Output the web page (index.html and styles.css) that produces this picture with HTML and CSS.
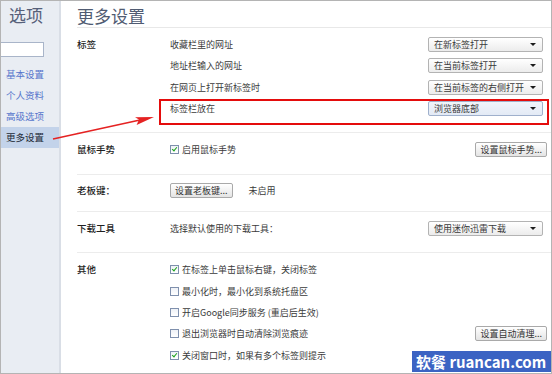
FILE: index.html
```html
<!DOCTYPE html>
<html lang="zh">
<head>
<meta charset="utf-8">
<title>更多设置</title>
<link rel="stylesheet" href="styles.css">
</head>
<body>
<div class="frame">
  <aside class="side">
    <div class="side-title">选项</div>
    <div class="search"></div>
    <nav class="nav">
      <a class="nav-item">基本设置</a>
      <a class="nav-item">个人资料</a>
      <a class="nav-item">高级选项</a>
      <a class="nav-item active">更多设置</a>
    </nav>
  </aside>
  <main class="main">
    <div class="title">更多设置</div>

    <section class="sec">
      <div class="label">标签</div>
      <div class="rows">
        <div class="row"><span>收藏栏里的网址</span><div class="select">在新标签打开<i class="caret"></i></div></div>
        <div class="row"><span>地址栏输入的网址</span><div class="select">在当前标签打开<i class="caret"></i></div></div>
        <div class="row"><span>在网页上打开新标签时</span><div class="select">在当前标签的右侧打开<i class="caret"></i></div></div>
        <div class="row hl"><span>标签栏放在</span><div class="select focus">浏览器底部<i class="caret"></i></div><div class="redbox"></div></div>
      </div>
    </section>

    <section class="sec">
      <div class="label">鼠标手势</div>
      <div class="rows">
        <div class="row"><span class="check"><i class="cb on"></i>启用鼠标手势</span><div class="btn edge">设置鼠标手势...</div></div>
      </div>
    </section>

    <section class="sec tight">
      <div class="label">老板键：</div>
      <div class="rows">
        <div class="row start"><div class="btn">设置老板键...</div><span class="status">未启用</span></div>
      </div>
    </section>

    <section class="sec">
      <div class="label">下载工具</div>
      <div class="rows">
        <div class="row"><span>选择默认使用的下载工具：</span><div class="select">使用迷你迅雷下载<i class="caret"></i></div></div>
      </div>
    </section>

    <section class="sec last">
      <div class="label">其他</div>
      <div class="rows">
        <div class="row"><span class="check"><i class="cb on"></i>在标签上单击鼠标右键，关闭标签</span></div>
        <div class="row"><span class="check"><i class="cb"></i>最小化时，最小化到系统托盘区</span></div>
        <div class="row"><span class="check"><i class="cb"></i>开启Google同步服务 (重启后生效)</span></div>
        <div class="row"><span class="check"><i class="cb"></i>退出浏览器时自动清除浏览痕迹</span><div class="btn edge">设置自动清理...</div></div>
        <div class="row"><span class="check"><i class="cb on"></i>关闭窗口时，如果有多个标签则提示</span></div>
      </div>
    </section>
  </main>

  <svg class="arrow" width="552" height="374" viewBox="0 0 552 374">
    <line x1="53" y1="139" x2="140" y2="120" stroke="#e52222" stroke-width="1.6"/>
    <polygon points="154,117 136.6,125 139,119.6 135,117.2" fill="#e52222"/>
  </svg>

  <div class="watermark">软餐 ruancan.com</div>
</div>
</body>
</html>
```

FILE: styles.css
```css
* { box-sizing: border-box; }

html, body {
  margin: 0;
  padding: 0;
  background: #ffffff;
}

body {
  font-family: "Noto Sans CJK SC", "Noto Sans", sans-serif;
  font-size: 9px;
  color: #3a3a3a;
}

.frame {
  position: relative;
  width: 552px;
  height: 374px;
  border: 1px solid #b4b4b4;
  display: flex;
  overflow: hidden;
  background: #ffffff;
}

/* ---------- sidebar ---------- */
.side {
  width: 60px;
  flex: none;
  background: #e9edf3;
  border-right: 2px solid #d9dee6;
  display: flex;
  flex-direction: column;
}

.side-title {
  font-size: 17px;
  line-height: 22px;
  height: 22px;
  margin: 3px 0 0 8px;
  color: #56607a;
}

.search {
  width: 43px;
  height: 15px;
  margin-top: 16px;
  background: #ffffff;
  border: 1px solid #a9b5c9;
  border-left: none;
}

.nav {
  display: flex;
  flex-direction: column;
  margin-top: 7px;
}

.nav-item {
  height: 21px;
  line-height: 21px;
  padding-left: 5px;
  font-size: 9.5px;
  color: #5675cc;
  text-decoration: none;
}

.nav-item.active {
  background: #c3d3ea;
  color: #222a38;
}

/* ---------- main ---------- */
.main {
  flex: 1;
  padding-left: 16px;
  display: flex;
  flex-direction: column;
}

.title {
  height: 30px;
  padding-top: 4px;
  font-size: 17px;
  line-height: 22px;
  color: #505b72;
  border-bottom: 1px solid #e8e8e8;
}

.sec {
  display: grid;
  grid-template-columns: 93px 1fr;
  padding: 6px 0 13px;
  border-bottom: 1px solid #ececec;
}

.sec.tight {
  padding: 5px 0 10px;
}

.sec.last {
  border-bottom: none;
}

.label {
  line-height: 21.33px;
  font-size: 9.5px;
  color: #1f1f1f;
  font-weight: 500;
}

.rows {
  display: flex;
  flex-direction: column;
}

.row {
  position: relative;
  height: 21.33px;
  display: flex;
  align-items: center;
  justify-content: space-between;
  padding-right: 4px;
  white-space: nowrap;
}

.row.start {
  justify-content: flex-start;
}

.status {
  margin-left: 16px;
}

/* select */
.select {
  position: relative;
  width: 115px;
  height: 15px;
  margin-right: 4px;
  padding-left: 5px;
  line-height: 13px;
  border: 1px solid #b3b3b3;
  border-radius: 2px;
  background: linear-gradient(#ffffff, #ececec);
  color: #3a3a3a;
}

.select.focus {
  background: linear-gradient(#f1f5fb, #e3eaf5);
  border-color: #9fb0cc;
}

.caret {
  position: absolute;
  right: 6px;
  top: 5px;
  width: 0;
  height: 0;
  border-left: 3px solid transparent;
  border-right: 3px solid transparent;
  border-top: 3px solid #1c1c1c;
}

/* button */
.btn {
  height: 15px;
  padding: 0 4px;
  line-height: 13px;
  border: 1px solid #a9a9a9;
  border-radius: 2px;
  background: linear-gradient(#ffffff, #e4e4e4);
  color: #333333;
}

/* checkbox */
.check {
  display: flex;
  align-items: center;
}

.cb {
  position: relative;
  width: 9px;
  height: 9px;
  margin-right: 3px;
  border: 1px solid #7f90ad;
  background: linear-gradient(#eef1f6, #ffffff);
  flex: none;
}

.cb.on::after {
  content: "";
  position: absolute;
  left: 2px;
  top: 0px;
  width: 2px;
  height: 4px;
  border-right: 1.5px solid #1aa31a;
  border-bottom: 1.5px solid #1aa31a;
  transform: rotate(40deg);
}

/* highlight */
.redbox {
  position: absolute;
  left: -11px;
  right: 2px;
  top: 1px;
  height: 26px;
  border: 2px solid #e40c0c;
  pointer-events: none;
}

.arrow {
  position: absolute;
  left: -1px;
  top: -1px;
  pointer-events: none;
}

.watermark {
  position: absolute;
  right: -1px;
  bottom: 1px;
  width: 140px;
  height: 21px;
  background: #3b63c3;
  color: #ffffff;
  font-size: 15px;
  font-weight: bold;
  line-height: 21px;
  padding-left: 4px;
  white-space: nowrap;
}
```
